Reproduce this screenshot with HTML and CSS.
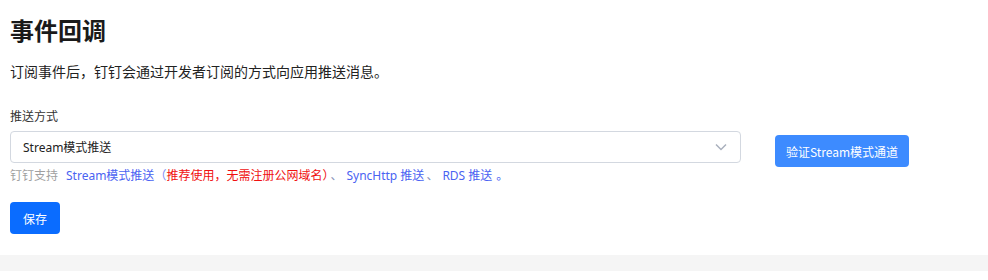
FILE: index.html
```html
<!DOCTYPE html>
<html lang="zh">
<head>
<meta charset="utf-8">
<link rel="stylesheet" href="styles.css">
</head>
<body>
<div class="page">
  <h1 class="title">事件回调</h1>
  <p class="desc">订阅事件后，钉钉会通过开发者订阅的方式向应用推送消息。</p>
  <div class="field">
    <div class="label">推送方式</div>
    <div class="row">
      <div class="col">
        <div class="select">
          <span class="select-value">Stream模式推送</span>
          <svg class="chevron" width="12" height="8" viewBox="0 0 12 8"><path d="M1 1.5 L6 6.5 L11 1.5" fill="none" stroke="#a9b0bd" stroke-width="1.5"/></svg>
        </div>
        <div class="help"><span class="muted">钉钉支持</span><span class="link">Stream模式推送</span><span class="paren">（</span><span class="red">推荐使用，无需注册公网域名）</span><span class="sep">、</span><span class="link">SyncHttp 推送</span><span class="sep">、</span><span class="link">RDS 推送</span><span class="sep2">。</span></div>
      </div>
      <button class="btn btn-verify">验证Stream模式通道</button>
    </div>
  </div>
  <button class="btn btn-save">保存</button>
</div>
<div class="band"></div>
</body>
</html>
```
FILE: styles.css
```css
* { box-sizing: border-box; }
html, body { margin: 0; padding: 0; background: #fff; }
body {
  font-family: "Noto Sans", "Noto Sans CJK SC", sans-serif;
  color: #222;
  width: 988px;
  height: 280px;
  overflow: hidden;
}
.page {
  padding: 12px 10px 0 10px;
  height: 255px;
}
.title {
  margin: 0;
  font-family: "Noto Sans CJK SC", sans-serif;
  font-size: 24px;
  line-height: 36px;
  font-weight: 700;
  color: #1a1a1a;
}
.desc {
  margin: 13px 0 0 0;
  font-family: "Noto Sans CJK SC", sans-serif;
  font-size: 14px;
  line-height: 20px;
  color: #222;
}
.field { margin-top: 26px; }
.label {
  font-family: "Noto Sans CJK SC", sans-serif;
  font-size: 12px;
  line-height: 18px;
  color: #333;
}
.row {
  display: flex;
  align-items: flex-start;
  margin-top: 6px;
}
.col { width: 731px; }
.select {
  height: 32px;
  border: 1px solid #d3d8e0;
  border-radius: 4px;
  display: flex;
  align-items: center;
  justify-content: space-between;
  padding: 0 13px 0 12px;
}
.select-value {
  font-family: "Noto Sans", "Noto Sans CJK SC", sans-serif;
  font-size: 12px;
  color: #222;
}
.chevron { display: block; }
.help {
  margin-top: 4px;
  font-family: "Noto Sans", "Noto Sans CJK SC", sans-serif;
  font-size: 12px;
  line-height: 18px;
  white-space: nowrap;
}
.muted { color: #a0a0a0; margin-right: 8px; }
.link { color: #4a63f2; }
.paren { color: #7a8cf5; }
.red { color: #f01010; }
.sep { color: #8a94b8; margin: 0 4px 0 2px; }
.sep2 { color: #4a63f2; margin-left: 4px; }
.btn {
  border: none;
  color: #fff;
  font-family: "Noto Sans CJK SC", sans-serif;
  font-size: 12px;
  height: 32px;
  border-radius: 4px;
  padding: 0 12px;
  cursor: pointer;
}
.btn-verify {
  margin-left: 34px;
  margin-top: 4px;
  background: #3d8bff;
  width: 134px;
  padding: 0;
}
.btn-save {
  margin-top: 17px;
  background: #0a6cff;
  width: 50px;
  padding: 0;
}
.band {
  height: 16px;
  background: #f5f5f5;
}
```
